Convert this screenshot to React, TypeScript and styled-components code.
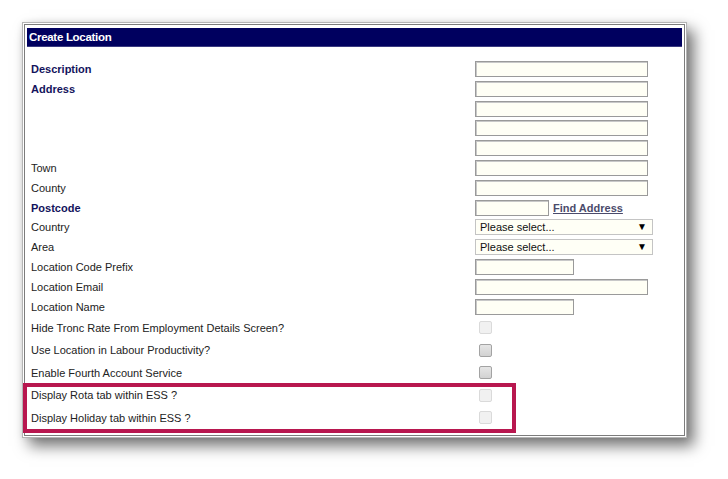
import React from 'react';
import styled, { createGlobalStyle } from 'styled-components';

const GlobalStyle = createGlobalStyle`
  html, body {
    margin: 0;
    padding: 0;
    background: #ffffff;
  }
  body {
    font-family: 'Liberation Sans', Arial, sans-serif;
    font-size: 11px;
    color: #1c1c1c;
  }
`;

const Page = styled.div`
  position: relative;
  width: 728px;
  height: 479px;
  padding: 22px 0 0 22px;
  box-sizing: border-box;
  overflow: hidden;
`;

const Frame = styled.div`
  width: 665px;
  box-sizing: border-box;
  background: #fff;
  border: 1px solid #b4b4b4;
  padding: 1px;
  box-shadow: 7px 8px 14px rgba(0, 0, 0, 0.55), 0 0 6px rgba(0, 0, 0, 0.08);
`;

const Panel = styled.div`
  border: 1px solid #7c7c7c;
  padding: 3px 2px 6px 2px;
`;

const Header = styled.div`
  height: 19px;
  background: #00005f;
  border-bottom: 1px solid #3a3a80;
  box-sizing: border-box;
  color: #fff;
  font-weight: bold;
  font-size: 11.5px;
  line-height: 19px;
  padding-left: 2px;
  letter-spacing: -0.3px;
`;

const Body = styled.div`
  padding: 14px 0 0 4px;
  display: flex;
  flex-direction: column;
`;

const CheckList = styled.div`
  display: flex;
  flex-direction: column;
  margin-top: -2px;
`;

const Row = styled.div<{ $h: number }>`
  display: flex;
  align-items: flex-start;
  height: ${(p) => p.$h}px;
`;

const CheckRow = styled(Row)`
  align-items: center;
`;

const Label = styled.div<{ $strong?: boolean }>`
  width: 444px;
  flex-shrink: 0;
  line-height: 16px;
  font-weight: ${(p) => (p.$strong ? 'bold' : 'normal')};
  color: ${(p) => (p.$strong ? '#13135c' : '#222')};
`;

const Controls = styled.div`
  display: flex;
  align-items: center;
  gap: 4px;
`;

const TextInput = styled.div<{ $w: number }>`
  width: ${(p) => p.$w}px;
  height: 16px;
  box-sizing: border-box;
  background: #fffff5;
  border: 1px solid #9a9a9a;
  box-shadow: inset 1px 1px 0 #c8c8c8;
`;

const SelectBox = styled.div`
  width: 178px;
  height: 16px;
  box-sizing: border-box;
  background: #fffff6;
  border: 1px solid #c4c4c4;
  display: flex;
  align-items: center;
  justify-content: space-between;
  padding: 0 5px 0 4px;
  font-family: 'Liberation Sans', Arial, sans-serif;
  font-size: 11px;
  color: #111;
`;

const Arrow = styled.span`
  font-size: 10px;
  line-height: 10px;
  color: #000;
`;

const Link = styled.a`
  font-weight: bold;
  color: #4b4b6b;
  text-decoration: underline;
  line-height: 16px;
  cursor: pointer;
`;

const Check = styled.span<{ $disabled?: boolean }>`
  display: block;
  margin-left: 4px;
  width: 13px;
  height: 13px;
  box-sizing: border-box;
  border-radius: 2px;
  border: 1px solid ${(p) => (p.$disabled ? '#dadada' : '#a3a3a3')};
  background: ${(p) =>
    p.$disabled
      ? '#f1f1f1'
      : 'linear-gradient(#e6e6e6, #d2d2d2)'};
`;

const Highlight = styled.div`
  position: absolute;
  left: 23px;
  top: 383px;
  width: 493px;
  height: 50px;
  box-sizing: border-box;
  border: 4px solid #b8174f;
  pointer-events: none;
`;

const INPUT_H = 19.8;
const CHECK_H = 22.5;

type Field = {
  label: string;
  strong?: boolean;
  kind: 'input' | 'select' | 'postcode';
  width?: number;
};

const fields: Field[] = [
  { label: 'Description', strong: true, kind: 'input', width: 173 },
  { label: 'Address', strong: true, kind: 'input', width: 173 },
  { label: '', kind: 'input', width: 173 },
  { label: '', kind: 'input', width: 173 },
  { label: '', kind: 'input', width: 173 },
  { label: 'Town', kind: 'input', width: 173 },
  { label: 'County', kind: 'input', width: 173 },
  { label: 'Postcode', strong: true, kind: 'postcode' },
  { label: 'Country', kind: 'select' },
  { label: 'Area', kind: 'select' },
  { label: 'Location Code Prefix', kind: 'input', width: 99 },
  { label: 'Location Email', kind: 'input', width: 173 },
  { label: 'Location Name', kind: 'input', width: 99 },
];

const checks = [
  { label: 'Hide Tronc Rate From Employment Details Screen?', disabled: true },
  { label: 'Use Location in Labour Productivity?', disabled: false },
  { label: 'Enable Fourth Account Service', disabled: false },
  { label: 'Display Rota tab within ESS ?', disabled: true },
  { label: 'Display Holiday tab within ESS ?', disabled: true },
];

const App = () => {
  return (
    <Page>
      <GlobalStyle />
      <Frame>
        <Panel>
          <Header>Create Location</Header>
          <Body>
            {fields.map((f, i) => (
              <Row key={i} $h={INPUT_H}>
                <Label $strong={f.strong}>{f.label}</Label>
                <Controls>
                  {f.kind === 'input' && <TextInput $w={f.width || 173} />}
                  {f.kind === 'postcode' && (
                    <>
                      <TextInput $w={74} />
                      <Link>Find Address</Link>
                    </>
                  )}
                  {f.kind === 'select' && (
                    <SelectBox>
                      <span>Please select...</span>
                      <Arrow>▼</Arrow>
                    </SelectBox>
                  )}
                </Controls>
              </Row>
            ))}
            <CheckList>
              {checks.map((c) => (
                <CheckRow key={c.label} $h={CHECK_H}>
                  <Label>{c.label}</Label>
                  <Check $disabled={c.disabled} />
                </CheckRow>
              ))}
            </CheckList>
          </Body>
        </Panel>
      </Frame>
      <Highlight />
    </Page>
  );
};

export default App;
